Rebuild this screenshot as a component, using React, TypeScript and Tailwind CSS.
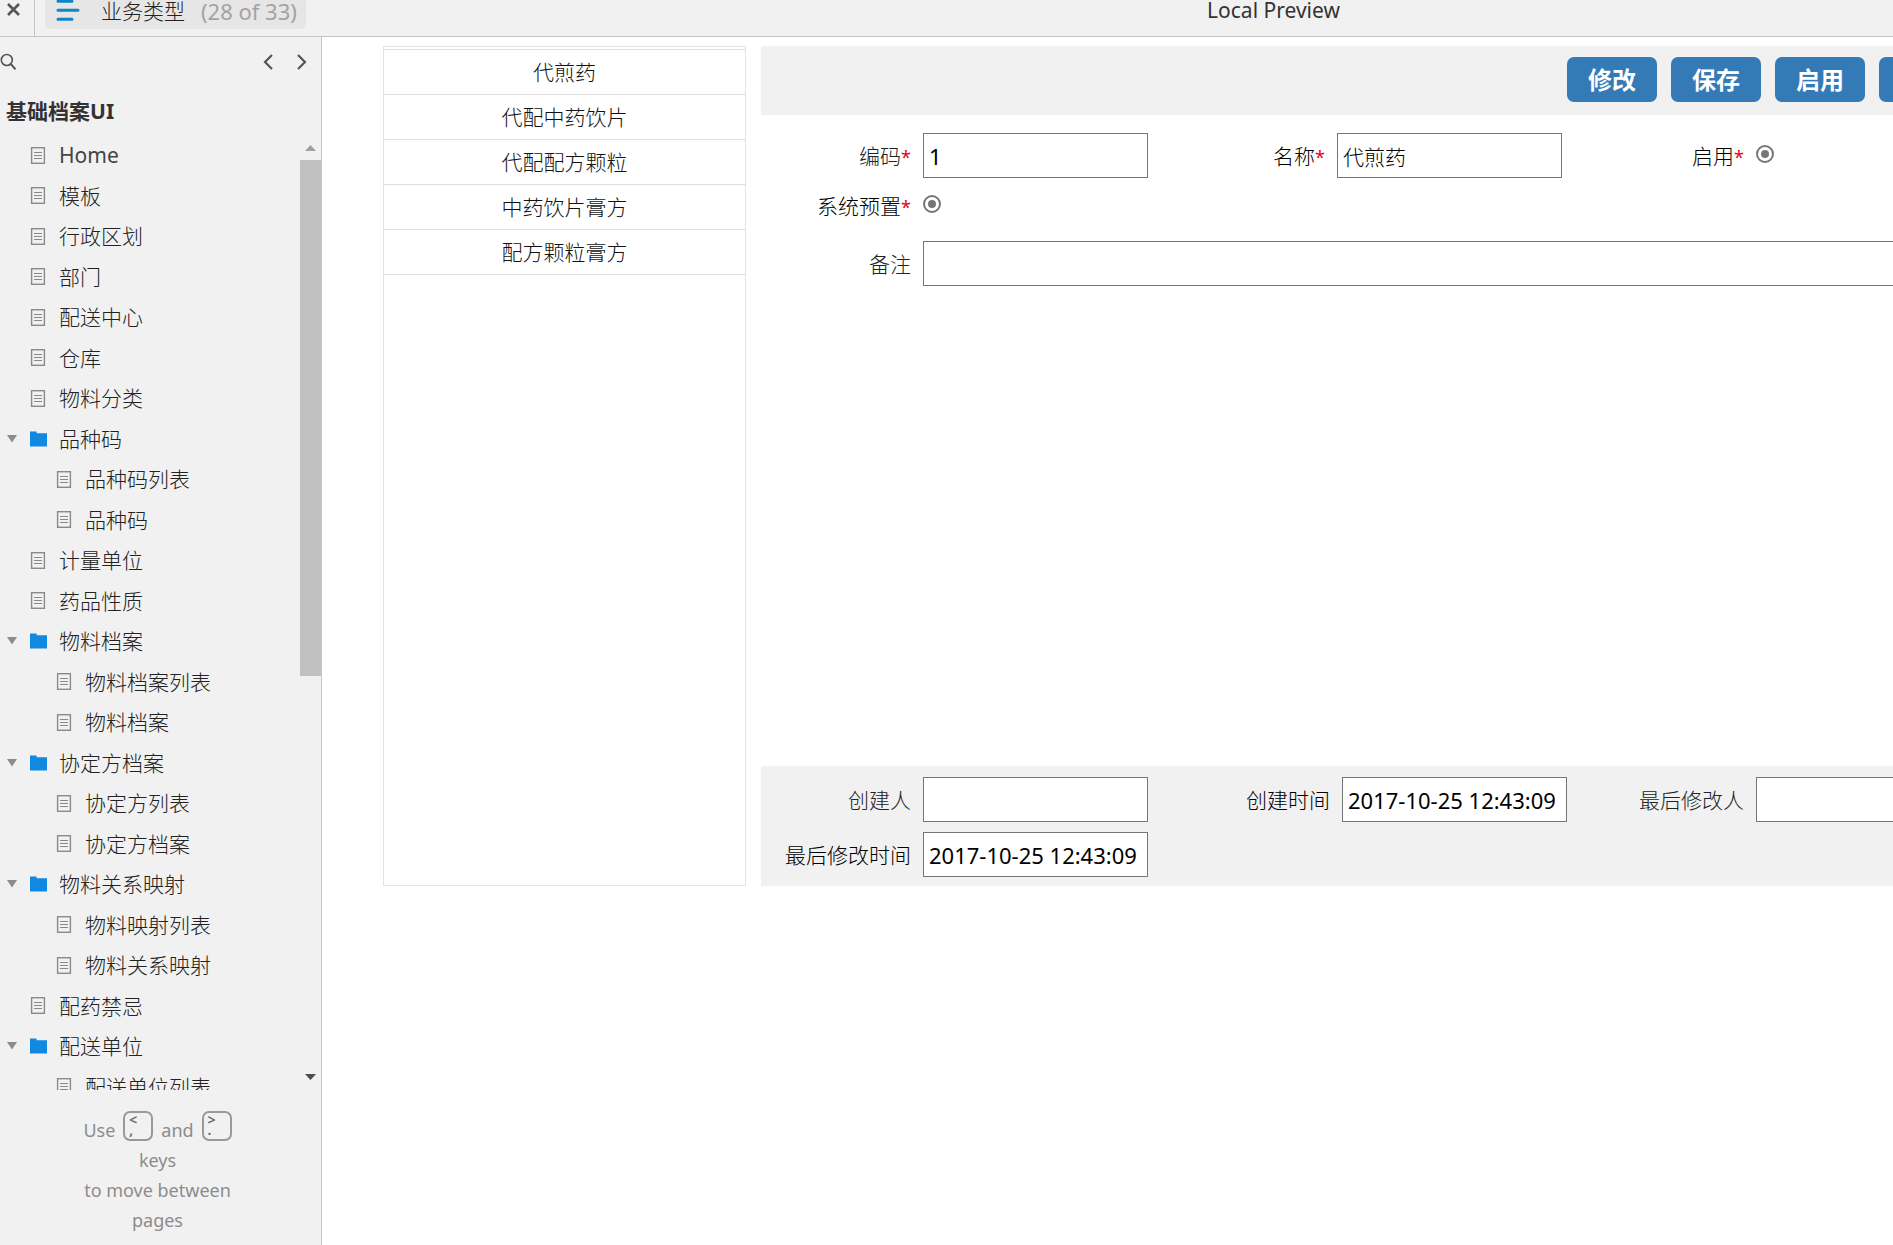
import React from "react";

type Node = { label: string; folder?: boolean; child?: boolean; latin?: boolean };

const TREE: Node[] = [
  { label: "Home", latin: true },
  { label: "模板" },
  { label: "行政区划" },
  { label: "部门" },
  { label: "配送中心" },
  { label: "仓库" },
  { label: "物料分类" },
  { label: "品种码", folder: true },
  { label: "品种码列表", child: true },
  { label: "品种码", child: true },
  { label: "计量单位" },
  { label: "药品性质" },
  { label: "物料档案", folder: true },
  { label: "物料档案列表", child: true },
  { label: "物料档案", child: true },
  { label: "协定方档案", folder: true },
  { label: "协定方列表", child: true },
  { label: "协定方档案", child: true },
  { label: "物料关系映射", folder: true },
  { label: "物料映射列表", child: true },
  { label: "物料关系映射", child: true },
  { label: "配药禁忌" },
  { label: "配送单位", folder: true },
  { label: "配送单位列表", child: true },
];

const TYPES = ["代煎药", "代配中药饮片", "代配配方颗粒", "中药饮片膏方", "配方颗粒膏方"];

function PageIcon() {
  return (
    <svg width="16" height="17" viewBox="0 0 16 17" fill="none" stroke="#8a8a8a" aria-hidden="true">
      <rect x="1.6" y="0.7" width="12.8" height="15.6" strokeWidth="1.4" />
      <path d="M4 5.5h8M4 8.5h8M4 11.5h8" strokeWidth="1.2" />
    </svg>
  );
}

function FolderIcon() {
  return (
    <svg width="17" height="16" viewBox="0 0 17 16" fill="#1189e0" aria-hidden="true">
      <path d="M0 .6H6.6V2.2H17V15.4H0Z" />
    </svg>
  );
}

function TreeRow({ node }: { node: Node }) {
  return (
    <li className={node.child ? "flex items-center pl-[26px]" : "flex items-center"}>
      <span className="flex w-[30px] shrink-0 pl-[7px]">
        {node.folder && (
          <svg width="10" height="8" viewBox="0 0 10 8" fill="#8c8c8c" aria-hidden="true">
            <path d="M0 0H10L5 7.6Z" />
          </svg>
        )}
      </span>
      <a href="#" className="flex items-center">
        <span className="w-[29px]">{node.folder ? <FolderIcon /> : <PageIcon />}</span>
        <span
          className={node.latin ? "whitespace-nowrap text-[#444444]" : "whitespace-nowrap font-light text-[#222222]"}
        >
          {node.label}
        </span>
      </a>
    </li>
  );
}

function Label({ id, children, required, soft }: { id: string; children: string; required?: boolean; soft?: boolean }) {
  return (
    <label
      htmlFor={id}
      className={
        soft
          ? "self-center whitespace-nowrap pr-3 text-right font-light text-[#222222]"
          : "self-center whitespace-nowrap pr-3 text-right font-light text-black"
      }
    >
      {children}
      {required && <span className="text-lg font-normal text-[#e60012]">*</span>}
    </label>
  );
}

function TextBox({ id, value = "", latin }: { id: string; value?: string; latin?: boolean }) {
  return (
    <input
      id={id}
      type="text"
      defaultValue={value}
      className={
        latin
          ? "h-[45px] w-full min-w-0 border border-[#767676] bg-white px-[5px] text-[22px] text-black"
          : "h-[45px] w-full min-w-0 border border-[#767676] bg-white px-[5px] font-light text-black"
      }
    />
  );
}

function Radio({ id }: { id: string }) {
  return (
    <input
      id={id}
      type="radio"
      defaultChecked
      className="mb-1 size-[18px] appearance-none self-center rounded-full border-2 border-[#767676] bg-[#767676] bg-clip-content p-[3px]"
    />
  );
}

const BUTTON = "h-[45px] w-[90px] shrink-0 rounded-[7px] bg-[#337ab7] text-2xl font-bold text-white";

function Key({ top, bottom }: { top: string; bottom: string }) {
  return (
    <kbd className="flex size-[30px] flex-col self-start rounded-[7px] border-2 border-[#999999] pl-1 pt-[2px] text-left font-['Noto_Sans',sans-serif] text-sm font-semibold leading-[10px] text-[#666666]">
      <span>{top}</span>
      <span>{bottom}</span>
    </kbd>
  );
}

export default function App() {
  return (
    <div className="flex h-screen flex-col overflow-hidden bg-white font-['Noto_Sans','Noto_Sans_CJK_SC',sans-serif] text-[21px] leading-[30px] text-[#333333]">
      <header className="flex h-[37px] shrink-0 items-start border-b border-[#c4c4c4] bg-[#f1f1f1]">
        <button aria-label="Close" className="h-9 w-[35px] shrink-0 border-r border-[#c4c4c4] pl-[7px]">
          <svg width="13" height="36" viewBox="0 0 13 36" stroke="#555555" strokeWidth="2.6" aria-hidden="true">
            <path d="M1 4L12 15M12 4L1 15" />
          </svg>
        </button>
        <button className="ml-[10px] flex h-[29px] w-[261px] shrink-0 items-start rounded-b-[5px] bg-[#e6e6e6] pl-[11px]">
          <svg width="25" height="22" viewBox="0 0 25 22" stroke="#0f87c4" strokeWidth="3" strokeLinecap="round" aria-hidden="true">
            <path d="M2 1.3H16M2 10.3H22M2 19.3H16" />
          </svg>
          <span className="ml-5 whitespace-nowrap font-light leading-[22px] text-[#222222]">业务类型</span>
          <span className="ml-4 whitespace-nowrap text-[22px] leading-[22px] text-[#a3a3a3]">(28 of 33)</span>
        </button>
        <div className="flex-1 pl-[348px] text-center leading-5">Local Preview</div>
      </header>

      <div className="flex min-h-0 flex-1">
        <aside className="flex w-[322px] shrink-0 flex-col border-r border-[#c4c4c4] bg-[#f1f1f1]">
          <div className="flex h-[50px] items-center justify-between pr-[14px]">
            <button aria-label="Search">
              <svg width="17" height="18" viewBox="0 0 17 18" fill="none" stroke="#555555" aria-hidden="true">
                <circle cx="6.8" cy="7" r="5.5" strokeWidth="1.6" />
                <path d="M10.8 11L15.5 16.4" strokeWidth="2" />
              </svg>
            </button>
            <div className="flex gap-[22px]">
              <button aria-label="Previous page">
                <svg width="11" height="16" viewBox="0 0 11 16" fill="none" stroke="#555555" strokeWidth="2.2" aria-hidden="true">
                  <path d="M9 1L2 8L9 15" />
                </svg>
              </button>
              <button aria-label="Next page">
                <svg width="11" height="16" viewBox="0 0 11 16" fill="none" stroke="#555555" strokeWidth="2.2" aria-hidden="true">
                  <path d="M2 1L9 8L2 15" />
                </svg>
              </button>
            </div>
          </div>
          <h1 className="flex h-12 items-center pl-[6px] font-bold">基础档案UI</h1>

          <div className="flex min-h-0 flex-1 overflow-hidden">
            <ul className="grid h-[972px] flex-1 auto-rows-fr">
              {TREE.map((node, i) => (
                <TreeRow key={i} node={node} />
              ))}
            </ul>
            <div className="flex w-[21px] flex-col items-center">
              <svg width="21" height="25" viewBox="0 0 21 25" fill="#a0a0a0" aria-hidden="true">
                <path d="M5 16L10.5 10L16 16Z" />
              </svg>
              <div className="h-[54%] w-full bg-[#c1c1c1]" />
              <div className="flex-1" />
              <svg width="21" height="20" viewBox="0 0 21 20" fill="#4d4d4d" aria-hidden="true">
                <path d="M5 4H16L10.5 10Z" />
              </svg>
            </div>
          </div>

          <div className="h-[155px] shrink-0 pr-[6px] pt-[21px] text-center text-lg leading-[30px] text-[#8c8c8c]">
            <div className="flex h-[34px] items-end justify-center gap-2">
              <span>Use</span>
              <Key top="<" bottom="," />
              <span>and</span>
              <Key top=">" bottom="." />
            </div>
            <p>
              keys
              <br />
              to move between
              <br />
              pages
            </p>
          </div>
        </aside>

        <main className="min-w-0 flex-1 overflow-hidden pl-[61px] pt-[9px]">
          <div className="-mr-[100px] flex h-[840px] gap-[15px]">
            <section className="w-[363px] shrink-0 border border-[#e4e4e4] pt-[2px]">
              <ul className="border-t border-[#dddddd] text-center font-light text-[#111111]">
                {TYPES.map((name) => (
                  <li key={name} className="flex h-[45px] items-center justify-center border-b border-[#dddddd]">
                    {name}
                  </li>
                ))}
              </ul>
            </section>

            <form className="flex min-w-0 flex-1 flex-col">
              <div className="flex h-[69px] shrink-0 items-center justify-end gap-[14px] bg-[#f1f1f1] pb-[2px] pr-6">
                <button type="button" className={BUTTON}>修改</button>
                <button type="button" className={BUTTON}>保存</button>
                <button type="button" className={BUTTON}>启用</button>
                <button type="button" aria-label="停用" className={BUTTON} />
              </div>

              <div className="grid flex-1 grid-cols-[162px_225px_189px_225px_194px_1fr] grid-rows-[45px_55px_45px] content-start pt-[18px]">
                <Label id="code" required soft>编码</Label>
                <TextBox id="code" value="1" latin />
                <Label id="name" required>名称</Label>
                <TextBox id="name" value="代煎药" />
                <Label id="enabled" required>启用</Label>
                <Radio id="enabled" />
                <Label id="preset" required>系统预置</Label>
                <div className="col-span-5 flex">
                  <Radio id="preset" />
                </div>
                <div className="col-span-6 mt-2 grid grid-cols-[162px_1fr]">
                  <Label id="remark" soft>备注</Label>
                  <TextBox id="remark" />
                </div>
              </div>

              <div className="grid h-[120px] grid-cols-[162px_225px_194px_225px_189px_225px] content-start gap-y-[10px] bg-[#f1f1f1] pt-[11px]">
                <Label id="creator" soft>创建人</Label>
                <TextBox id="creator" />
                <Label id="created">创建时间</Label>
                <TextBox id="created" value="2017-10-25 12:43:09" latin />
                <Label id="modifier" soft>最后修改人</Label>
                <TextBox id="modifier" />
                <Label id="modified">最后修改时间</Label>
                <TextBox id="modified" value="2017-10-25 12:43:09" latin />
              </div>
            </form>
          </div>
        </main>
      </div>
    </div>
  );
}
